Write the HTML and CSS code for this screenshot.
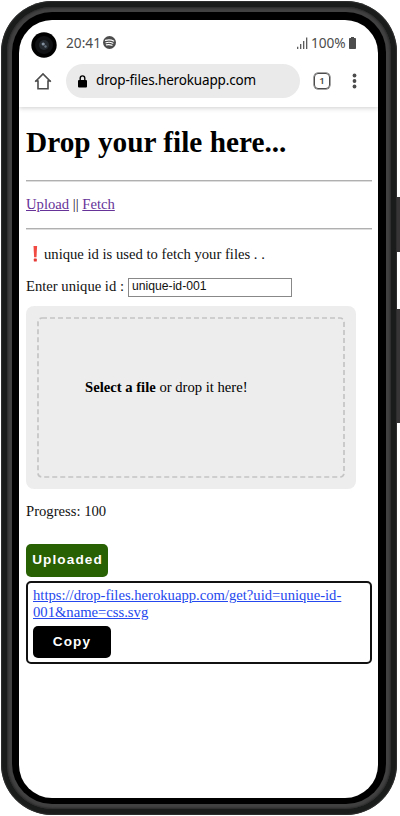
FILE: index.html
```html
<!DOCTYPE html>
<html lang="en">
<head>
<meta charset="utf-8">
<title>Drop your file here</title>
<link rel="stylesheet" href="styles.css">
</head>
<body>
<div class="phone">
  <i class="side-key volume"></i>
  <i class="side-key power"></i>
  <div class="rim"><div class="bezel"><div class="screen">
    <header class="chrome">
      <div class="status">
        <svg class="camera" width="26" height="26" viewBox="0 0 26 26"><circle cx="13" cy="13" r="12.7" fill="#000"/><circle cx="13" cy="13" r="9" fill="#101214"/><circle cx="13" cy="13" r="5" fill="#252a30"/><circle cx="12.2" cy="12" r="1.6" fill="#8290a0"/><circle cx="14.5" cy="14.5" r="1.2" fill="#65717d"/></svg>
        <span class="time">20:41</span>
        <svg class="music" width="13" height="13" viewBox="0 0 13 13"><circle cx="6.5" cy="6.5" r="6.5" fill="#4c4c4c"/><path d="M2.5 4.4Q6.8 3.1 10.7 5M3 6.700Q6.6 5.600 9.8 7.200M3.4 8.900Q6.4 8.100 9 9.300" fill="none" stroke="#fff" stroke-width="1.2" stroke-linecap="round"/></svg>
        <svg class="signal" width="11" height="12" viewBox="0 0 11 12"><path d="M.7 9.8V12M3.7 7.1V12M6.7 4V12M9.7.5V12" stroke="#4c4c4c" stroke-width="1.2"/></svg>
        <span class="percent">100%</span>
        <svg class="battery" width="7" height="12" viewBox="0 0 7 12"><path d="M2 0h3v1h1.2q.8 0 .8.8v9.4q0 .8-.8.8H.8Q0 12 0 11.200V1.800Q0 1 .8 1H2z" fill="#4c4c4c"/></svg>
      </div>
      <div class="toolbar">
        <svg class="home" width="18" height="18" viewBox="0 0 18 18"><path d="M1.200 9.800 9 2l7.800 7.800M1 9h3v7.700h10V9h3" fill="none" stroke="#4c4c4c" stroke-width="1.600"/></svg>
        <div class="address">
          <svg class="lock" width="9" height="13" viewBox="0 0 9 13"><path d="M2.200 6V3.200a2.300 2.300 0 0 1 4.600 0V6" fill="none" stroke="#000" stroke-width="1.400"/><rect y="5" width="9" height="7.500" rx="1"/></svg>
          <span>drop-files.herokuapp.com</span>
        </div>
        <span class="tabs">1</span>
        <svg class="more" width="5" height="16" viewBox="0 0 5 16" fill="#4c4c4c"><circle cx="2.500" cy="2.500" r="1.900"/><circle cx="2.500" cy="8" r="1.900"/><circle cx="2.500" cy="13.500" r="1.900"/></svg>
      </div>
    </header>
    <main>
      <h1>Drop your file here...</h1>
      <hr>
      <nav><a href="#">Upload</a> || <a href="#">Fetch</a></nav>
      <hr>
      <p class="notice"><svg width="18" height="16" viewBox="0 0 18 16"><path d="M7.500 0h3.600l-.6 11.200H8.100z" fill="#f04a43"/><rect x="7.800" y="12.600" width="3" height="3" rx=".6" fill="#e53935"/></svg><span>unique id is used to fetch your files . .</span></p>
      <label class="field"><span>Enter unique id :</span><input value="unique-id-001"></label>
      <div class="drop"><div class="drop-inner"><svg class="dashes" width="308" height="161"><rect x="1" y="1" width="306" height="159" rx="4" fill="none" stroke="#c4c4c4" stroke-width="1.700" stroke-dasharray="5 3"/></svg><span class="hint"><b>Select a file</b> or drop it here!</span></div></div>
      <p class="progress">Progress: 100</p>
      <button class="uploaded">Uploaded</button>
      <section class="result">
        <a href="#">https://drop-files.herokuapp.com/get?uid=unique-id-<br>001&amp;name=css.svg</a>
        <button class="copy">Copy</button>
      </section>
    </main>
  </div></div></div>
</div>
</body>
</html>
```
FILE: styles.css
```css
* { box-sizing: border-box; }
body { margin: 0; width: 400px; height: 816px; background: #fff; overflow: hidden; }
.phone {
  position: relative; width: 396px; height: 814px; margin: 1px 0 0 1px;
  padding: 6px; border-radius: 51px; background: #1a1b1b;
  box-shadow: inset 0 0 1px 1px #303030;
}
.side-key { position: absolute; left: 396px; width: 3px; background: #373535; }
.volume { top: 196px; height: 55px; }
.power { top: 308px; height: 114px; }
.rim { height: 802px; padding: 5px; border-radius: 45px; background: #414141; box-shadow: inset 0 0 2px 1px #292929; }
.bezel { height: 792px; padding: 8px 8px 7px 7px; border-radius: 40px; background: #000; }
.screen { width: 359px; height: 778px; border-radius: 33px; background: #fff; overflow: hidden; }

.chrome { height: 87px; box-shadow: 0 1px 5px #0003; }
.status { display: flex; align-items: center; height: 46px; padding: 0 22px 0 12px; color: #4c4c4c; font: 13.700px/20px "Noto Sans", sans-serif; }
.camera { margin-top: 3px; }
.time { margin-left: 9px; width: 37px; }
.music, .battery { margin-top: -1px; }
.signal { margin-left: auto; margin-top: -1px; }
.percent { margin-left: 3px; width: 38px; letter-spacing: -.05px; }
.toolbar { display: flex; align-items: center; height: 34px; margin-top: -2px; padding-left: 15px; }
.toolbar svg { flex-shrink: 0; }
.address { display: flex; align-items: center; width: 234px; height: 34px; margin-left: 14px; padding-left: 12px; border-radius: 17px; background: #eaeaea; font: 13.500px/20px "Noto Sans", sans-serif; color: #000; }
.address span { margin: -2px 0 0 9px; white-space: nowrap; letter-spacing: -.16px; }
.tabs { width: 16px; height: 16px; margin-left: 14px; border: 1.500px solid #4c4c4c; border-radius: 4px; color: #4c4c4c; font: 600 9.500px/14px "Noto Sans", sans-serif; text-align: center; box-shadow: 0 0 0 .5px #4c4c4c; }
.more { margin-left: 22px; }

main { width: 353px; padding-left: 7px; font: 14.650px/18px "Liberation Serif", serif; color: #111; }
h1 { margin: 0; padding-top: 17px; height: 73px; font-size: 29.300px; line-height: 36px; color: #000; white-space: nowrap; }
hr { height: 2px; margin: 0; border: 0; border-top: 1px solid #b0b0b0; border-bottom: 1px solid #ddd; }
nav { height: 46px; padding-top: 13px; }
nav a { color: #663399; }
.notice { display: flex; height: 36px; margin: 0; padding-top: 16px; line-height: 17px; white-space: nowrap; }
.notice svg { flex-shrink: 0; }
.field { display: flex; align-items: center; height: 30px; margin-top: 5px; }
.field span { margin-top: -1px; }
.field input { width: 164px; height: 19px; margin: 2px 0 0 4px; padding: 0 3px 3px; border: 1px solid #888; border-radius: 0; font: 12.200px "Liberation Sans", sans-serif; color: #111; }
.drop { width: 330px; height: 183px; margin-top: 5px; padding: 11px 10px 11px 11px; border-radius: 8px; background: #ededed; }
.drop-inner { position: relative; height: 161px; padding: 61px 0 0 48px; }
.dashes { position: absolute; inset: 0; }
.hint { display: block; white-space: nowrap; color: #000; }
.progress { height: 55px; margin: 0; padding-top: 13px; }
button { display: block; margin: 0; padding: 0; border: 0; border-radius: 5px; color: #fff; font: bold 13.600px "Liberation Sans", sans-serif; letter-spacing: 1.100px; }
.uploaded { width: 82px; height: 33px; padding: 0 0 2px 1px; background: #286004; }
.result { width: 346px; height: 83px; margin-top: 4px; padding: 4px 5px; border: 2px solid #111; border-radius: 5px; line-height: 17px; white-space: nowrap; }
.result a { color: #2448ee; }
.copy { width: 78px; height: 32px; margin-top: 5px; padding-bottom: 1px; background: #000; }
```
